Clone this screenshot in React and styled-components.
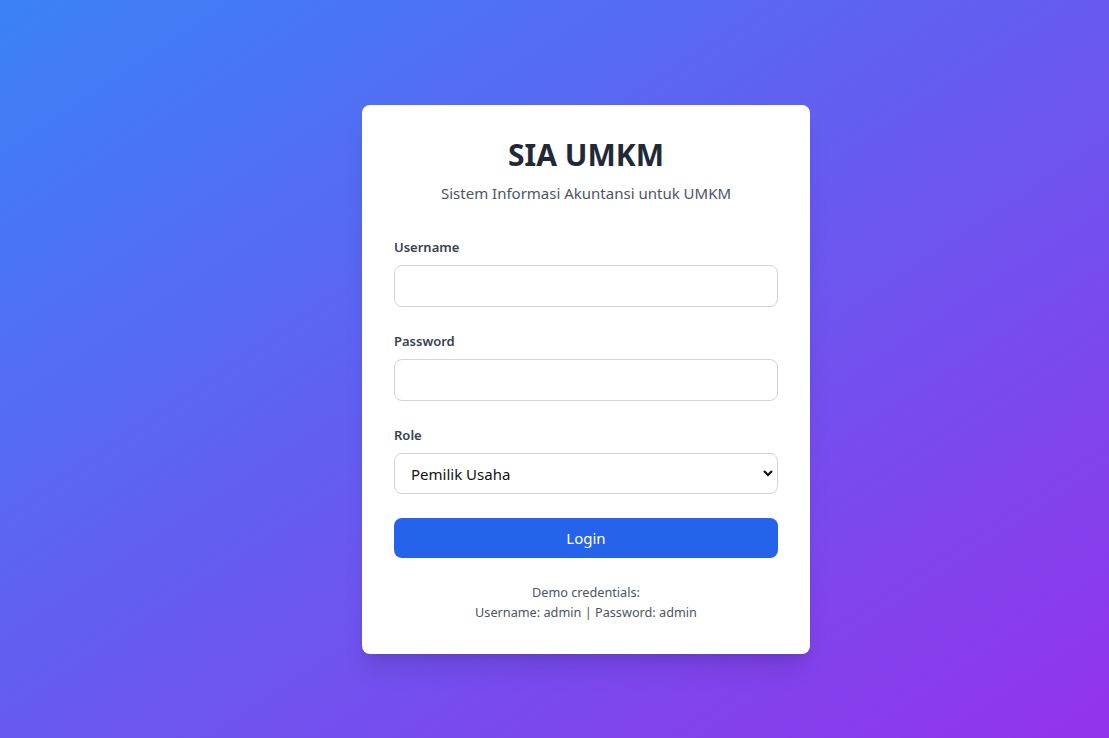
import React from 'react'
import styled, { createGlobalStyle } from 'styled-components'

const GlobalStyle = createGlobalStyle`
  * { box-sizing: border-box; }
  body {
    margin: 0;
    font-family: "Noto Sans", "Open Sans", sans-serif;
  }
`

const Page = styled.div`
  min-height: 100vh;
  display: flex;
  align-items: center;
  justify-content: center;
  padding: 21px 0 0 63px;
  background: linear-gradient(to bottom right, #3b82f6, #9333ea);
`

const Card = styled.div`
  width: 448px;
  background: #fff;
  border-radius: 8px;
  padding: 32px;
  box-shadow: 0 20px 25px -5px rgba(0, 0, 0, 0.1), 0 8px 10px -6px rgba(0, 0, 0, 0.1);
`

const Header = styled.div`
  text-align: center;
  margin-bottom: 32px;
`

const Title = styled.h1`
  margin: 0;
  font-size: 30px;
  line-height: 36px;
  font-weight: 700;
  color: #1f2937;
`

const Subtitle = styled.p`
  margin: 8px 0 0;
  font-size: 15px;
  line-height: 24px;
  color: #4b5563;
`

const Form = styled.form`
  display: flex;
  flex-direction: column;
  gap: 24px;
`

const Field = styled.div`
  display: flex;
  flex-direction: column;
`

const Label = styled.label`
  font-size: 13px;
  line-height: 20px;
  font-weight: 600;
  color: #374151;
  margin-bottom: 8px;
`

const Input = styled.input`
  height: 42px;
  width: 100%;
  padding: 8px 16px;
  border: 1px solid #d1d5db;
  border-radius: 8px;
  font: inherit;
  outline: none;
`

const SelectWrap = styled.div`
  position: relative;
`

const Select = styled.select`
  appearance: none;
  height: 41px;
  width: 100%;
  padding: 0 16px;
  border: 1px solid #d1d5db;
  border-radius: 8px;
  background: #fff;
  font-family: inherit;
  font-size: 15px;
  color: #111;
  outline: none;
`

const Chevron = styled.svg`
  position: absolute;
  right: 4px;
  top: 15px;
  pointer-events: none;
`

const Button = styled.button`
  height: 40px;
  border: none;
  border-radius: 8px;
  background: #2563eb;
  color: #fff;
  font-family: inherit;
  font-size: 15px;
  cursor: pointer;
`

const Demo = styled.div`
  margin-top: 24px;
  text-align: center;
  font-size: 12.7px;
  line-height: 20px;
  color: #4b5563;
`

export default function App() {
  return (
    <Page>
      <GlobalStyle />
      <Card>
        <Header>
          <Title>SIA UMKM</Title>
          <Subtitle>Sistem Informasi Akuntansi untuk UMKM</Subtitle>
        </Header>
        <Form onSubmit={(e) => e.preventDefault()}>
          <Field>
            <Label>Username</Label>
            <Input type="text" />
          </Field>
          <Field>
            <Label>Password</Label>
            <Input type="password" />
          </Field>
          <Field>
            <Label>Role</Label>
            <SelectWrap>
              <Select defaultValue="pemilik">
                <option value="pemilik">Pemilik Usaha</option>
                <option value="admin">Admin</option>
              </Select>
              <Chevron width="12" height="10" viewBox="0 0 12 10">
                <path d="M2 3 L6 7 L10 3" fill="none" stroke="#111" strokeWidth="2.2" />
              </Chevron>
            </SelectWrap>
          </Field>
          <Button type="submit">Login</Button>
        </Form>
        <Demo>
          Demo credentials:
          <br />
          Username: admin | Password: admin
        </Demo>
      </Card>
    </Page>
  )
}
